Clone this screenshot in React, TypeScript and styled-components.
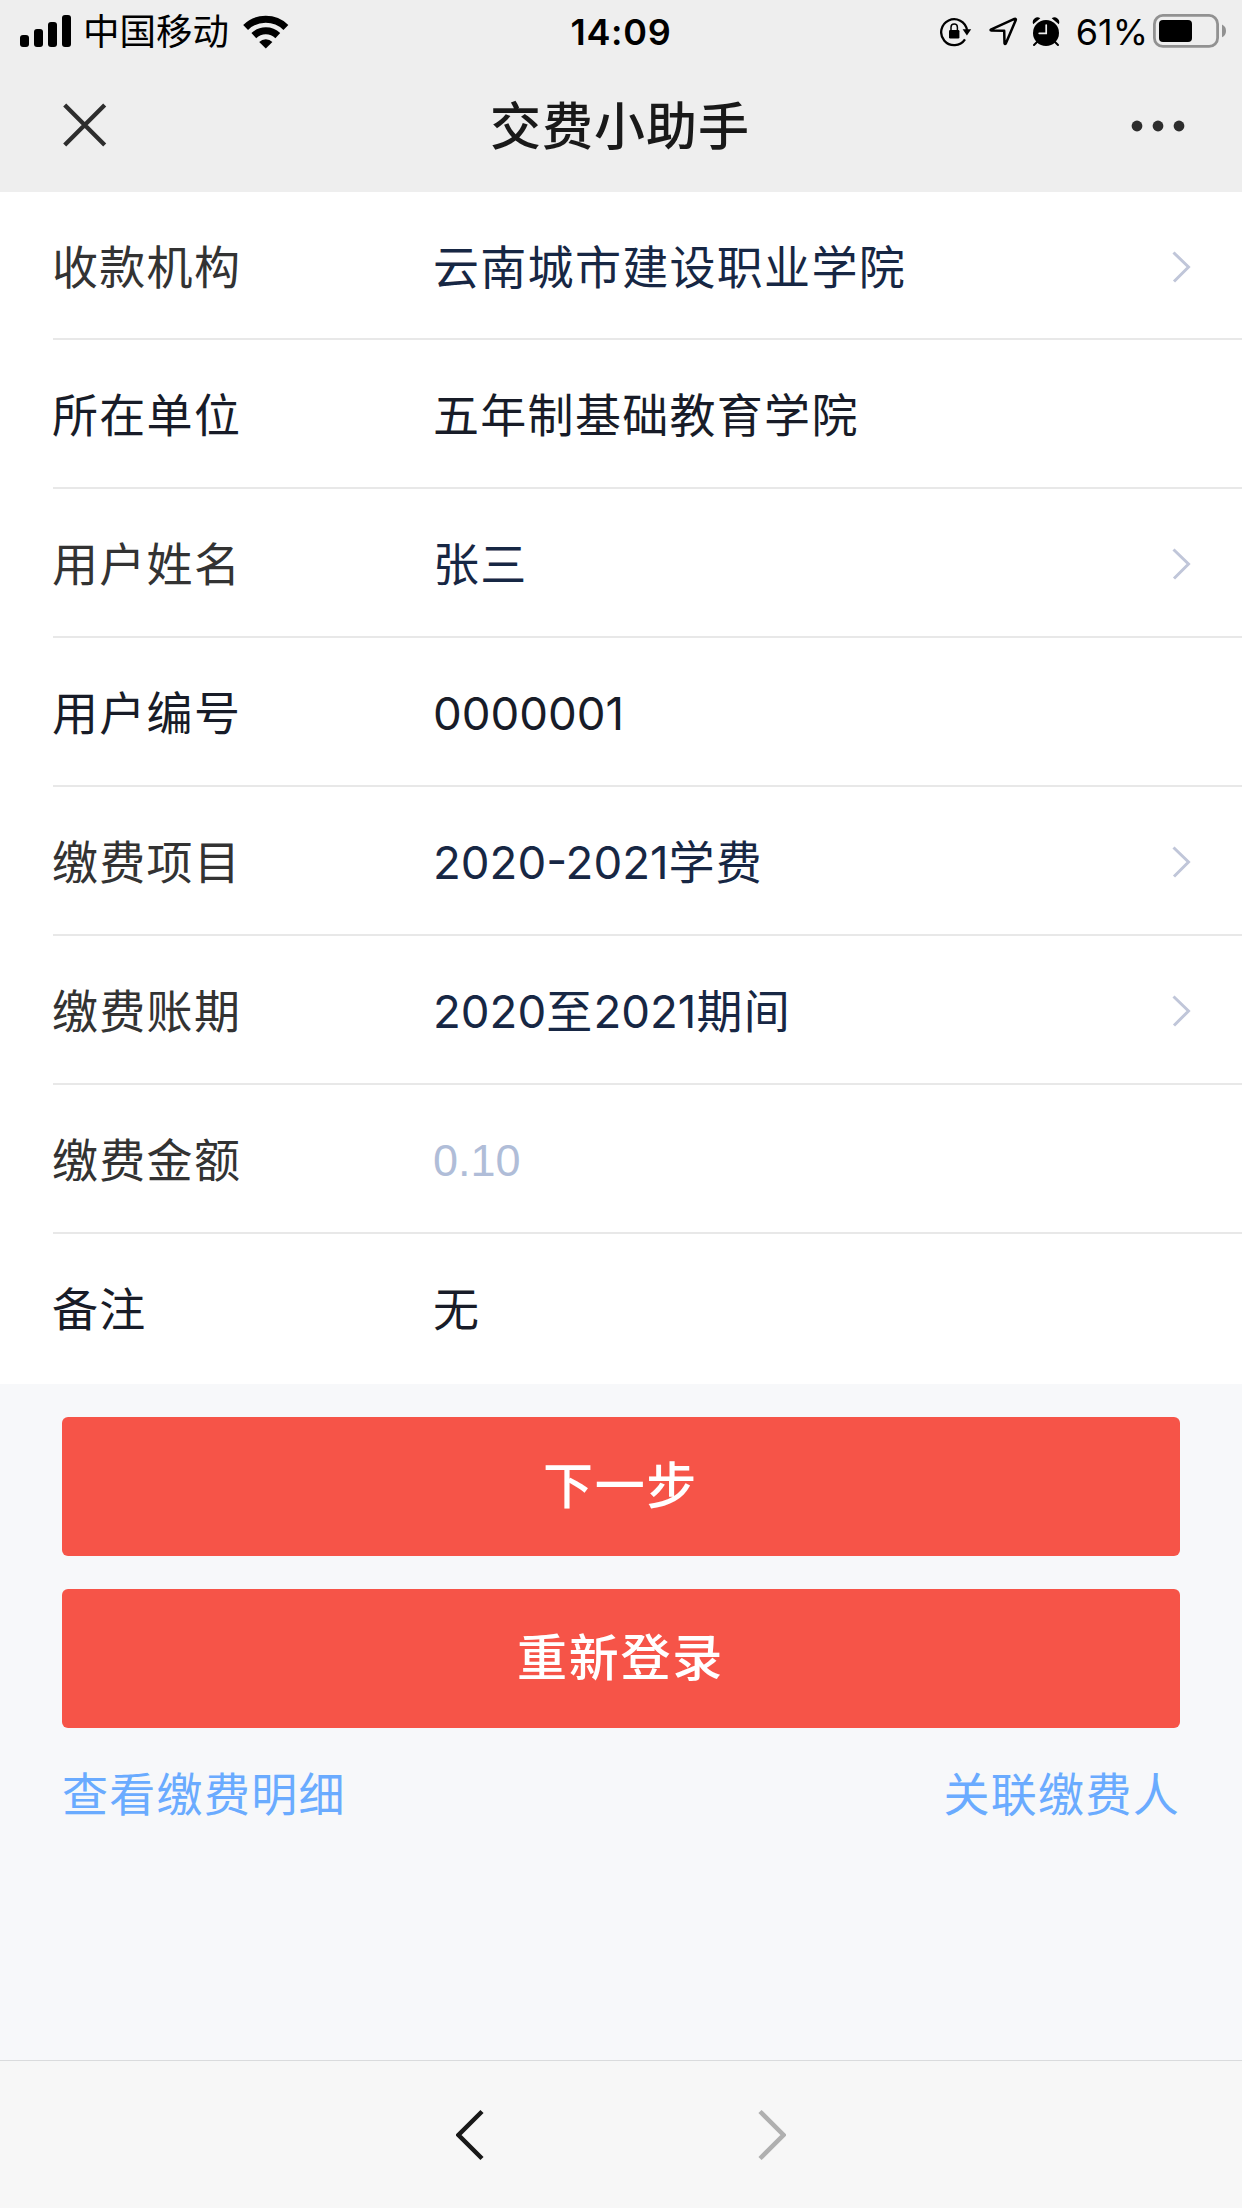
import React from "react";
import styled, { createGlobalStyle } from "styled-components";

const Global = createGlobalStyle`
  * { box-sizing: border-box; }
  html, body { margin: 0; padding: 0; }
  body { background: #f7f8fa; font-family: Inter, "Noto Sans CJK SC", sans-serif; }
  svg { display: block; flex: none; }
`;

const Screen = styled.div`
  width: 1242px;
  height: 2208px;
  display: flex;
  flex-direction: column;
  background: #f7f8fa;
  overflow: hidden;
`;

const Header = styled.header`
  height: 192px;
  background: #eee;
  display: flex;
  flex-direction: column;
`;

const StatusBar = styled.div`
  height: 62px;
  display: grid;
  grid-template-columns: 1fr auto 1fr;
  align-items: center;
  color: #000;
`;

const StatusLeft = styled.div`
  display: flex;
  align-items: center;
  padding-left: 20px;
`;

const Carrier = styled.span`
  font-family: "Noto Sans CJK SC", sans-serif;
  font-size: 36.5px;
  line-height: 62px;
  height: 62px;
  margin: -3px 14px 0 12px;
`;

const Clock = styled.span`
  font-size: 36px;
  font-weight: 600;
  letter-spacing: 0.7px;
  line-height: 62px;
`;

const StatusRight = styled.div`
  display: flex;
  align-items: center;
  justify-content: flex-end;
  padding-right: 15px;
`;

const StatusIcon = styled.span<{ $after: number; $lift?: number }>`
  display: flex;
  margin-right: ${(p) => p.$after}px;
  padding-bottom: ${(p) => p.$lift ?? 0}px;
`;

const Percent = styled.span`
  font-size: 36px;
  line-height: 62px;
  margin-right: 5px;
  padding-top: 1px;
`;

const NavBar = styled.div`
  flex: 1;
  display: grid;
  grid-template-columns: 160px 1fr 160px;
  align-items: center;
  padding-bottom: 4px;
`;

const NavButton = styled.button<{ $end?: boolean }>`
  border: 0;
  background: none;
  display: flex;
  padding: ${(p) => (p.$end ? "2px 57px 0 0" : "0 0 0 62px")};
  justify-content: ${(p) => (p.$end ? "flex-end" : "flex-start")};
`;

const Title = styled.h1`
  margin: 0;
  padding: 0 2px 4px 0;
  font-family: "Noto Sans CJK SC", sans-serif;
  font-size: 51px;
  font-weight: 500;
  letter-spacing: 1px;
  line-height: 80px;
  text-align: center;
  color: #191919;
`;

const Form = styled.section`
  background: #fff;
  height: 1192px;
  padding-left: 52px;
  display: flex;
  flex-direction: column;
`;

const Row = styled.div`
  height: 149px;
  flex: none;
  display: flex;
  align-items: center;
  margin-left: 1px;
  padding-right: 50px;
  border-bottom: 2px solid #e8e8e8;
  font-size: 46px;
  &:first-child { height: 148px; }
  &:last-child { border-bottom-color: transparent; }
`;

const Label = styled.span<{ $dark?: boolean }>`
  width: 381px;
  margin-left: -1px;
  padding-bottom: 3px;
  font-family: "Noto Sans CJK SC", sans-serif;
  letter-spacing: 1.3px;
  line-height: 66px;
  color: ${(p) => (p.$dark ? "#181c28" : "#333")};
`;

const Value = styled.span<{ $tone: Tone }>`
  flex: 1;
  display: flex;
  align-items: center;
  line-height: 66px;
  color: ${(p) => tones[p.$tone]};
`;

const Han = styled.span`
  padding-bottom: 3px;
  font-family: "Noto Sans CJK SC", sans-serif;
  letter-spacing: 1.3px;
`;

const Digits = styled.span`
  padding-top: 5px;
  font-family: Inter, sans-serif;
  font-size: 45.6px;
`;

const Amount = styled.span`
  padding-top: 4px;
  font-family: "Liberation Sans", sans-serif;
  font-size: 45px;
`;

const RowArrow = styled.span`
  display: flex;
  padding-top: 3px;
`;

const Actions = styled.section`
  padding: 33px 62px 0;
  display: flex;
  flex-direction: column;
  gap: 33px;
`;

const PrimaryButton = styled.button`
  height: 139px;
  border: 0;
  border-radius: 6px;
  padding: 0 1px 8px 0;
  background: #f65448;
  color: #fff;
  font-family: "Noto Sans CJK SC", sans-serif;
  font-size: 50px;
  font-weight: 500;
  letter-spacing: 1.7px;
  line-height: 131px;
`;

const Links = styled.div`
  display: flex;
  justify-content: space-between;
  margin-top: -3px;
`;

const TextLink = styled.a`
  font-family: "Noto Sans CJK SC", sans-serif;
  font-size: 46px;
  letter-spacing: 1.3px;
  line-height: 66px;
  color: #6aabff;
`;

const BottomBar = styled.nav`
  margin-top: auto;
  height: 148px;
  background: #f7f7f7;
  border-top: 1px solid #dadbdd;
  display: flex;
  justify-content: center;
  align-items: center;
  gap: 274px;
`;

type Tone = "navy" | "ink" | "muted";
const tones: Record<Tone, string> = { navy: "#172744", ink: "#181c28", muted: "#b0bdd8" };

type Item = { label: string; value: string; tone: Tone; link?: boolean; dark?: boolean };
const items: Item[] = [
  { label: "收款机构", value: "云南城市建设职业学院", tone: "navy", link: true },
  { label: "所在单位", value: "五年制基础教育学院", tone: "ink", dark: true },
  { label: "用户姓名", value: "张三", tone: "navy", link: true },
  { label: "用户编号", value: "0000001", tone: "ink", dark: true },
  { label: "缴费项目", value: "2020-2021学费", tone: "navy", link: true },
  { label: "缴费账期", value: "2020至2021期间", tone: "navy", link: true },
  { label: "缴费金额", value: "0.10", tone: "muted" },
  { label: "备注", value: "无", tone: "ink", dark: true },
];

const renderValue = (item: Item) =>
  item.tone === "muted" ? (
    <Amount>{item.value}</Amount>
  ) : (
    (item.value.match(/[\d-]+|[^\d-]+/g) ?? []).map((run, i) =>
      /\d/.test(run) ? <Digits key={i}>{run}</Digits> : <Han key={i}>{run}</Han>
    )
  );

const Signal = () => (
  <svg width="51" height="34" viewBox="0 0 51 34">
    <rect x="0" y="20" width="9" height="12" rx="3" />
    <rect x="14" y="14" width="9" height="18" rx="3" />
    <rect x="28" y="7" width="9" height="25" rx="3" />
    <rect x="42" y="0" width="9" height="32" rx="3" />
  </svg>
);

const Wifi = () => (
  <svg width="46" height="34" viewBox="0 0 46 34">
    <g fill="none" stroke="#000" strokeWidth="7">
      <path d="M2.6 12.4a29 29 0 0 1 40.3 0" />
      <path d="M10.8 20.6a17.5 17.5 0 0 1 24 0" />
    </g>
    <path d="M22.8 33.5l-6.6-6.6a9.8 9.8 0 0 1 13.2 0z" />
  </svg>
);

const RotationLock = () => (
  <svg width="32" height="30" viewBox="0 0 32 30">
    <path d="M25 22.400A13 13 0 1 1 27 13" fill="none" stroke="#000" strokeWidth="2.300" />
    <path d="M22.600 12.200h8.600l-4.300 6.200z" />
    <rect x="9" y="13" width="10.400" height="8.400" rx="1.200" />
    <path d="M11 13.500v-3.300a3.200 3.200 0 0 1 6.400 0v3.300" fill="none" stroke="#000" strokeWidth="1.500" />
  </svg>
);

const Location = () => (
  <svg width="29" height="29" viewBox="0 0 29 29">
    <path d="M1.800 12.600L25.400 1.900q2-.5 1.300 1.400L16.800 26.500q-.9 1.300-1.300-.2l-.3-12.600-13.100-.3q-.9-.3-.3-.8z" fill="none" stroke="#000" strokeWidth="2.500" strokeLinejoin="round" />
  </svg>
);

const Alarm = () => (
  <svg width="28" height="30" viewBox="0 0 28 30">
    <circle cx="14" cy="16" r="13" />
    <path d="M1.200 7.200A4.800 4.800 0 0 1 8.300 1.300zM26.800 7.200A4.800 4.800 0 0 0 19.700 1.300z" />
    <path d="M5 25l-3 3M23 25l3 3" stroke="#000" strokeWidth="2" strokeLinecap="round" />
    <path d="M14.200 8v8.300h-7" fill="none" stroke="#eee" strokeWidth="1.700" strokeLinecap="round" />
  </svg>
);

const Battery = () => (
  <svg width="74" height="34" viewBox="0 0 74 34">
    <rect x="1.400" y="1.400" width="63.200" height="31" rx="8.500" fill="none" stroke="#919191" strokeWidth="2.800" />
    <rect x="6" y="6" width="33" height="22" rx="4" />
    <path d="M69 10.600q4 2 4 6.300t-4 6.300z" fill="#919191" />
  </svg>
);

const Chevron = () => (
  <svg width="20" height="34" viewBox="0 0 20 34">
    <path d="M1.500 2.500l15 14.500-14.500 14.500" fill="none" stroke="#c0c6d9" strokeWidth="3" />
  </svg>
);

const HistoryArrow = ({ forward }: { forward?: boolean }) => (
  <svg width="28" height="52" viewBox="0 0 28 52">
    <path
      d={forward ? "M2 2.500L25.500 26 2 49.500" : "M26 2.500L2.500 26 26 49.500"}
      fill="none"
      stroke={forward ? "#b0b0b0" : "#191919"}
      strokeWidth="4.500"
    />
  </svg>
);

export default function App() {
  return (
    <Screen>
      <Global />
      <Header>
        <StatusBar>
          <StatusLeft>
            <Signal />
            <Carrier>中国移动</Carrier>
            <Wifi />
          </StatusLeft>
          <Clock>14:09</Clock>
          <StatusRight>
            <StatusIcon $after={17}><RotationLock /></StatusIcon>
            <StatusIcon $after={14}><Location /></StatusIcon>
            <StatusIcon $after={16}><Alarm /></StatusIcon>
            <Percent>61%</Percent>
            <StatusIcon $after={0} $lift={1}><Battery /></StatusIcon>
          </StatusRight>
        </StatusBar>
        <NavBar>
          <NavButton aria-label="关闭">
            <svg width="46" height="46" viewBox="0 0 46 46">
              <path d="M2.700 3l40 40M42.700 3l-40 40" stroke="#2d2d2d" strokeWidth="4.300" />
            </svg>
          </NavButton>
          <Title>交费小助手</Title>
          <NavButton $end aria-label="更多">
            <svg width="54" height="12" viewBox="0 0 54 12" fill="#2d2d2d">
              <circle cx="6" cy="6" r="5.400" />
              <circle cx="27" cy="6" r="5.400" />
              <circle cx="48" cy="6" r="5.400" />
            </svg>
          </NavButton>
        </NavBar>
      </Header>
      <Form>
        {items.map((item) => (
          <Row key={item.label}>
            <Label $dark={item.dark}>{item.label}</Label>
            <Value $tone={item.tone}>{renderValue(item)}</Value>
            {item.link && <RowArrow><Chevron /></RowArrow>}
          </Row>
        ))}
      </Form>
      <Actions>
        <PrimaryButton>下一步</PrimaryButton>
        <PrimaryButton>重新登录</PrimaryButton>
        <Links>
          <TextLink>查看缴费明细</TextLink>
          <TextLink>关联缴费人</TextLink>
        </Links>
      </Actions>
      <BottomBar>
        <HistoryArrow />
        <HistoryArrow forward />
      </BottomBar>
    </Screen>
  );
}
